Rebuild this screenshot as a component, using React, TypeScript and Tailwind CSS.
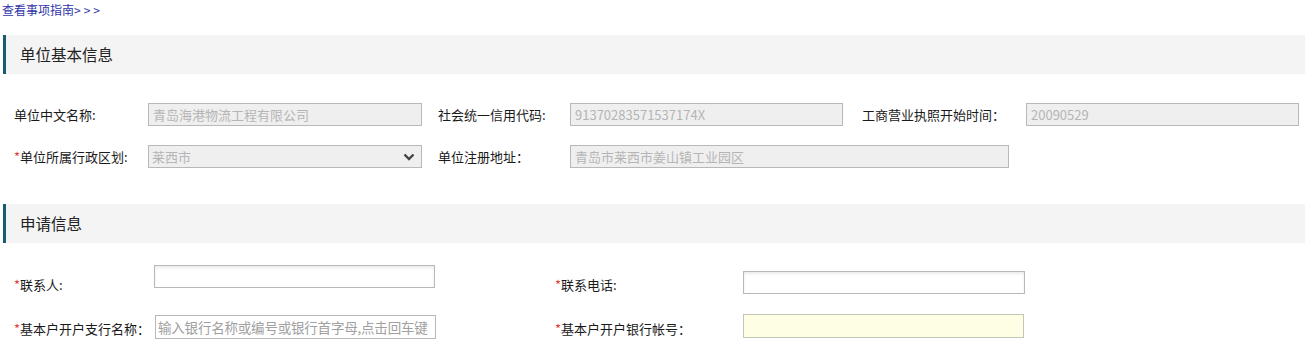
import React from 'react';

const font = { fontFamily: '"Noto Sans CJK SC", "Microsoft YaHei", sans-serif' };

const SectionTitle = ({ title }: { title: string }) => (
  <div className="ml-[3px] flex h-[39px] items-center border-l-[3px] border-[#1b5a73] bg-[#f4f4f4] pl-[14px] text-[15.5px] text-[#222]">
    {title}
  </div>
);

const Req = () => <span className="text-[#e23c3c]">*</span>;

const ReadOnly = ({ value, w }: { value: string; w: string }) => (
  <div
    className={`${w} flex h-[23px] items-center overflow-hidden border border-[#b8b8b8] bg-[#efefef] px-[4px] text-[13px] text-[#b5b5b5]`}
  >
    <span className="truncate">{value}</span>
  </div>
);

const App = () => {
  return (
    <div className="h-[347px] w-[1305px] overflow-hidden bg-white text-[13px] text-[#1a1a1a]" style={font}>
      {/* guide link */}
      <div className="pl-[2px] pt-[3px] text-[12px] leading-[14px]">
        <a href="#" className="text-[#2f35a8]">
          查看事项指南<span className="tracking-[3px]">&gt;&gt;&gt;</span>
        </a>
      </div>

      <div className="mt-[18px]">
        <SectionTitle title="单位基本信息" />
      </div>

      {/* 单位基本信息 rows */}
      <div className="mt-[29px] flex flex-col gap-[19px] pl-[14px]">
        <div className="flex items-center">
          <div className="w-[134px]">单位中文名称:</div>
          <ReadOnly w="w-[274px]" value="青岛海港物流工程有限公司" />
          <div className="ml-[16px] w-[132px]">社会统一信用代码:</div>
          <ReadOnly w="w-[273px]" value="91370283571537174X" />
          <div className="ml-[19px] w-[164px]">工商营业执照开始时间：</div>
          <ReadOnly w="w-[273px]" value="20090529" />
        </div>
        <div className="flex items-center">
          <div className="w-[134px]">
            <Req />
            单位所属行政区划:
          </div>
          <div className="flex h-[23px] w-[274px] items-center justify-between border border-[#b8b8b8] bg-[#efefef] pl-[3px] pr-[6px] text-[13px] text-[#b5b5b5]">
            <span>莱西市</span>
            <svg width="12" height="8" viewBox="0 0 12 8">
              <path d="M1.5 1.5 L6 6 L10.5 1.5" fill="none" stroke="#444" strokeWidth="2.4" />
            </svg>
          </div>
          <div className="ml-[16px] w-[132px]">单位注册地址：</div>
          <ReadOnly w="w-[439px]" value="青岛市莱西市姜山镇工业园区" />
        </div>
      </div>

      <div className="mt-[36px]">
        <SectionTitle title="申请信息" />
      </div>

      {/* 申请信息 rows */}
      <div className="mt-[22px] pl-[14px]">
        <div className="flex items-start">
          <div className="w-[140px] pt-[10px]">
            <Req />
            联系人:
          </div>
          <input className="h-[23px] w-[281px] border border-[#b8b8b8] bg-white shadow-[inset_0_2px_3px_rgba(0,0,0,0.08)] outline-none" />
          <div className="ml-[120px] w-[188px] pt-[10px]">
            <Req />
            联系电话:
          </div>
          <input className="mt-[6px] h-[23px] w-[282px] border border-[#b8b8b8] bg-white shadow-[inset_0_2px_3px_rgba(0,0,0,0.08)] outline-none" />
        </div>
        <div className="mt-[19px] flex items-start">
          <div className="w-[141px] pt-[5px]">
            <Req />
            基本户开户支行名称：
          </div>
          <input
            placeholder="输入银行名称或编号或银行首字母,点击回车键"
            className="mt-[1px] h-[24px] w-[281px] border border-[#b8b8b8] bg-white px-[2px] text-[13.5px] tracking-[-0.2px] placeholder:text-[#a0a0a0] outline-none"
          />
          <div className="ml-[119px] w-[188px] pt-[5px]">
            <Req />
            基本户开户银行帐号：
          </div>
          <input className="h-[24px] w-[281px] border border-[#c4c4b8] bg-[#fefee4] outline-none" />
        </div>
      </div>
    </div>
  );
};

export default App;
